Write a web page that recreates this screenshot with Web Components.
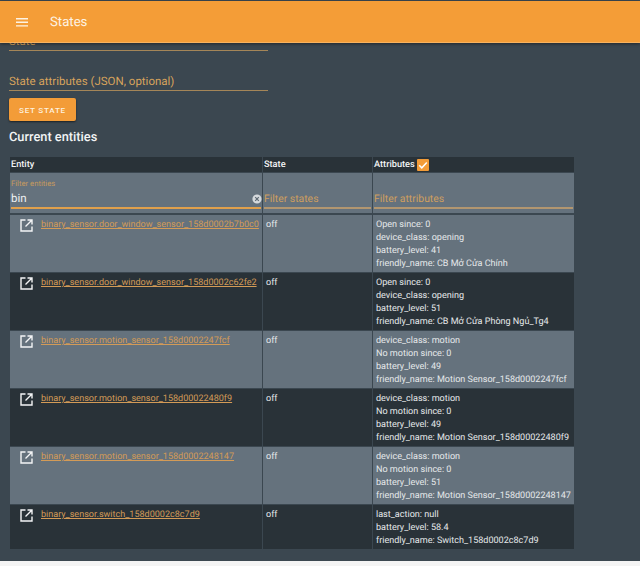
<!DOCTYPE html>
<html>
<head>
<meta charset="utf-8">
<style>
  html, body { margin: 0; padding: 0; height: 566px; overflow: hidden; background: #f4f4f4; }
  body { font-family: Roboto, "Liberation Sans", sans-serif; text-rendering: geometricPrecision; }
</style>
</head>
<body>
<states-page></states-page>

<script>
const ROWS = [
  { id: "binary_sensor.door_window_sensor_158d0002b7b0c0", attrs: ["Open since: 0", "device_class: opening", "battery_level: 41", "friendly_name: CB Mở Cửa Chính"] },
  { id: "binary_sensor.door_window_sensor_158d0002c62fe2", attrs: ["Open since: 0", "device_class: opening", "battery_level: 51", "friendly_name: CB Mở Cửa Phòng Ngủ_Tg4"] },
  { id: "binary_sensor.motion_sensor_158d0002247fcf", attrs: ["device_class: motion", "No motion since: 0", "battery_level: 49", "friendly_name: Motion Sensor_158d0002247fcf"] },
  { id: "binary_sensor.motion_sensor_158d00022480f9", attrs: ["device_class: motion", "No motion since: 0", "battery_level: 49", "friendly_name: Motion Sensor_158d00022480f9"] },
  { id: "binary_sensor.motion_sensor_158d0002248147", attrs: ["device_class: motion", "No motion since: 0", "battery_level: 51", "friendly_name: Motion Sensor_158d0002248147"] },
  { id: "binary_sensor.switch_158d0002c8c7d9", attrs: ["last_action: null", "battery_level: 58.4", "friendly_name: Switch_158d0002c8c7d9"] },
];

class AppHeader extends HTMLElement {
  constructor() {
    super();
    this.attachShadow({ mode: "open" }).innerHTML = `
      <style>
        :host {
          display: flex;
          flex: none;
          align-items: center;
          position: relative;
          z-index: 2;
          height: 40px;
          margin-top: 1px;
          padding: 1px 0 0 16px;
          gap: 22px;
          background: #f49d37;
          color: #fdf3e4;
          font-size: 13.2px;
          border-bottom: 1px solid #f8b25f;
          box-shadow: 0 1px 3px rgba(0, 0, 0, 0.45);
        }
        svg { display: block; }
      </style>
      <svg width="12" height="9" viewBox="0 0 12 9"><path d="M0 0h12v1.4H0zM0 3.6h12V5H0zM0 7.2h12v1.4H0z" fill="#fdf3e4"/></svg>
      <span><slot></slot></span>
    `;
  }
}
customElements.define("app-header", AppHeader);

class TextLine extends HTMLElement {
  constructor() {
    super();
    this.attachShadow({ mode: "open" }).innerHTML = `
      <style>
        :host {
          display: block;
          width: 259px;
          color: #d7a35c;
          font-size: 11.5px;
          line-height: 14px;
          border-bottom: 1px solid #a58658;
          padding-bottom: 2px;
        }
      </style>
      <slot></slot>
    `;
  }
}
customElements.define("text-line", TextLine);

class FilterCell extends HTMLElement {
  constructor() {
    super();
    this.attachShadow({ mode: "open" }).innerHTML = `
      <style>
        :host {
          display: flex;
          flex-direction: column;
          justify-content: flex-end;
          position: relative;
          background: #65727d;
          padding: 0 1px 4px 1px;
          font-size: 10.4px;
        }
        .label { color: #c59a5e; font-size: 7.7px; line-height: 10px; margin-bottom: 2px; }
        .value { font-size: 11.5px; line-height: 15px; color: #eef0f1; padding-bottom: 1px; border-bottom: 2px solid #e0a04c; }
        .placeholder { line-height: 15px; color: #cf9f5f; padding-bottom: 1px; border-bottom: 2px solid #b29670; }
        .clear {
          position: absolute; right: 0; bottom: 9px;
          width: 10px; height: 10px;
        }
      </style>
      <div id="box"></div>
    `;
  }
  connectedCallback() {
    const box = this.shadowRoot.getElementById("box");
    const label = this.getAttribute("label");
    const value = this.getAttribute("value");
    if (value) {
      box.innerHTML = `
        <div class="label">${label}</div>
        <div class="value">${value}</div>
        <svg class="clear" viewBox="0 0 10 10"><circle cx="5" cy="5" r="4.6" fill="#d5d9dc"/><path d="M3.2 3.2l3.6 3.6M6.8 3.2L3.2 6.8" stroke="#5d6972" stroke-width="1.2"/></svg>
      `;
    } else {
      box.innerHTML = `<div class="placeholder">${label}</div>`;
    }
  }
}
customElements.define("filter-cell", FilterCell);

class EntityRow extends HTMLElement {
  constructor() {
    super();
    this.attachShadow({ mode: "open" }).innerHTML = `
      <style>
        :host {
          display: grid;
          grid-template-columns: 252px 109px 201px;
          column-gap: 1px;
          font-size: 9.05px;
          line-height: 13px;
          color: #e6e9eb;
        }
        .cell { padding: 4px 2px 1px 3px; }
        :host([odd]) .cell { background: #65727d; }
        :host(:not([odd])) .cell { background: #293238; }
        .entity { display: flex; padding-left: 10px; gap: 8px; }
        svg { flex: none; }
        a { color: #d39b57; text-decoration: underline; white-space: nowrap; }
        .attr { white-space: nowrap; }
      </style>
      <div class="cell entity">
        <svg width="13" height="13" viewBox="0 0 13 13" fill="none" stroke="#f4f5f6" stroke-width="1.4"><path d="M5.5 1H1v11h11V7.5"/><path d="M7.5 1H12v4.5M12 1L5.5 7.5"/></svg>
        <a href="#" id="link"></a>
      </div>
      <div class="cell" id="state"></div>
      <div class="cell attr" id="attrs"></div>
    `;
  }
  set row(row) {
    this.shadowRoot.getElementById("link").textContent = row.id;
    this.shadowRoot.getElementById("state").textContent = "off";
    this.shadowRoot.getElementById("attrs").innerHTML = row.attrs.map(a => `<div>${a}</div>`).join("");
  }
}
customElements.define("entity-row", EntityRow);

class EntitiesTable extends HTMLElement {
  constructor() {
    super();
    this.attachShadow({ mode: "open" }).innerHTML = `
      <style>
        :host { display: flex; flex-direction: column; gap: 1px; width: 564px; }
        .grid {
          display: grid;
          grid-template-columns: 252px 109px 201px;
          column-gap: 1px;
        }
        .head > div {
          background: #293238;
          color: #f4f5f6;
          font-size: 9.2px;
          font-weight: 500;
          height: 15px;
          line-height: 15px;
          padding-left: 1px;
          display: flex;
          align-items: center;
          gap: 2px;
        }
        .filters { margin-bottom: 1px; }
        .filters filter-cell { height: 40px; box-sizing: border-box; }
        .check {
          width: 12px; height: 12px;
          background: #f39c38;
          border-radius: 1px;
        }
        .check svg { display: block; }
      </style>
      <div class="grid head">
        <div>Entity</div>
        <div>State</div>
        <div>Attributes
          <span class="check"><svg width="12" height="12" viewBox="0 0 12 12"><path d="M2.2 6.2l2.6 2.6 5-5.4" fill="none" stroke="#fff" stroke-width="1.5"/></svg></span>
        </div>
      </div>
      <div class="grid filters">
        <filter-cell label="Filter entities" value="bin"></filter-cell>
        <filter-cell label="Filter states"></filter-cell>
        <filter-cell label="Filter attributes"></filter-cell>
      </div>
      <div id="rows" style="display:flex;flex-direction:column;gap:1px"></div>
    `;
  }
  connectedCallback() {
    const rows = this.shadowRoot.getElementById("rows");
    ROWS.forEach((r, i) => {
      const el = document.createElement("entity-row");
      if (i % 2 === 0) el.setAttribute("odd", "");
      el.row = r;
      rows.appendChild(el);
    });
  }
}
customElements.define("entities-table", EntitiesTable);

class StatesPage extends HTMLElement {
  constructor() {
    super();
    this.attachShadow({ mode: "open" }).innerHTML = `
      <style>
        :host {
          display: flex;
          flex-direction: column;
          height: 561px;
          background: #3b4750;
          overflow: hidden;
        }
        main {
          display: flex;
          flex-direction: column;
          flex: none;
          padding-left: 9px;
          margin-top: -9px;
          align-items: flex-start;
        }
        text-line + text-line { margin-top: 23px; }
        button {
          margin: 7px 0 0;
          width: 67px;
          height: 23px;
          border: 0;
          border-radius: 2px;
          padding: 0;
          background: #f39c38;
          color: #fdf0df;
          font: 500 8.1px Roboto, sans-serif;
          letter-spacing: 0.75px;
          box-shadow: 0 1px 2px rgba(0, 0, 0, 0.55);
        }
        h2 {
          margin: 9px 0 12px;
          font-size: 12.8px;
          font-weight: 500;
          line-height: 15px;
          color: #f2f4f5;
        }
        entities-table { margin-left: 1px; }
      </style>
      <app-header>States</app-header>
      <main>
        <text-line>State</text-line>
        <text-line>State attributes (JSON, optional)</text-line>
        <button>SET STATE</button>
        <h2>Current entities</h2>
        <entities-table></entities-table>
      </main>
    `;
  }
}
customElements.define("states-page", StatesPage);
</script>
</body>
</html>
